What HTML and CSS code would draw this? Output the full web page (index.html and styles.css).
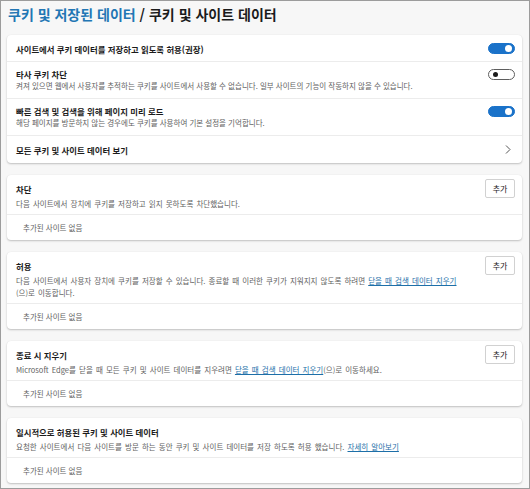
FILE: index.html
```html
<!DOCTYPE html>
<html lang="ko">
<head>
    <meta charset="UTF-8">
    <meta name="viewport" content="width=device-width, initial-scale=1.0">
    <title>쿠키 및 사이트 데이터</title>
    <link rel="stylesheet" href="styles.css">
</head>
<body>
    <div class="frame">
        <h1 class="page-title"><a class="crumb" href="#">쿠키 및 저장된 데이터</a> / 쿠키 및 사이트 데이터</h1>

        <div class="card">
            <div class="row">
                <div class="row-text">
                    <div class="row-title">사이트에서 쿠키 데이터를 저장하고 읽도록 허용(권장)</div>
                </div>
                <span class="toggle on"></span>
            </div>
            <div class="row">
                <div class="row-text">
                    <div class="row-title">타사 쿠키 차단</div>
                    <div class="row-desc">켜져 있으면 웹에서 사용자를 추적하는 쿠키를 사이트에서 사용할 수 없습니다. 일부 사이트의 기능이 작동하지 않을 수 있습니다.</div>
                </div>
                <span class="toggle"></span>
            </div>
            <div class="row">
                <div class="row-text">
                    <div class="row-title">빠른 검색 및 검색을 위해 페이지 미리 로드</div>
                    <div class="row-desc">해당 페이지를 방문하지 않는 경우에도 쿠키를 사용하여 기본 설정을 기억합니다.</div>
                </div>
                <span class="toggle on"></span>
            </div>
            <div class="row">
                <div class="row-text">
                    <div class="row-title">모든 쿠키 및 사이트 데이터 보기</div>
                </div>
                <svg class="chevron" width="6" height="9" viewBox="0 0 6 9"><path d="M1 0.5 L5 4.5 L1 8.5" fill="none" stroke="#555" stroke-width="1"/></svg>
            </div>
        </div>

        <div class="card">
            <div class="list-head">
                <div class="row-text">
                    <div class="list-title">차단</div>
                    <div class="row-desc">다음 사이트에서 장치에 쿠키를 저장하고 읽지 못하도록 차단했습니다.</div>
                </div>
                <button class="add-btn">추가</button>
            </div>
            <div class="empty">추가된 사이트 없음</div>
        </div>

        <div class="card">
            <div class="list-head">
                <div class="row-text">
                    <div class="list-title">허용</div>
                    <div class="row-desc">다음 사이트에서 사용자 장치에 쿠키를 저장할 수 있습니다. 종료할 때 이러한 쿠키가 지워지지 않도록 하려면 <a href="#">닫을 때 검색 데이터 지우기</a><br>(으)로 이동합니다.</div>
                </div>
                <button class="add-btn">추가</button>
            </div>
            <div class="empty">추가된 사이트 없음</div>
        </div>

        <div class="card">
            <div class="list-head">
                <div class="row-text">
                    <div class="list-title">종료 시 지우기</div>
                    <div class="row-desc">Microsoft Edge를 닫을 때 모든 쿠키 및 사이트 데이터를 지우려면 <a href="#">닫을 때 검색 데이터 지우기</a>(으)로 이동하세요.</div>
                </div>
                <button class="add-btn">추가</button>
            </div>
            <div class="empty">추가된 사이트 없음</div>
        </div>

        <div class="card">
            <div class="list-head">
                <div class="row-text">
                    <div class="list-title">일시적으로 허용된 쿠키 및 사이트 데이터</div>
                    <div class="row-desc">요청한 사이트에서 다음 사이트를 방문 하는 동안 쿠키 및 사이트 데이터를 저장 하도록 허용 했습니다. <a href="#">자세히 알아보기</a></div>
                </div>
            </div>
            <div class="empty">추가된 사이트 없음</div>
        </div>
    </div>
</body>
</html>
```

FILE: styles.css
```css
html, body {
    margin: 0;
    padding: 0;
}
body {
    font-family: "Noto Sans CJK KR", "Noto Sans", sans-serif;
    color: #1b1b1b;
    background: #fff;
}
.frame {
    box-sizing: border-box;
    width: 530px;
    height: 489px;
    border: 1px solid #9c9c9c;
    background-color: #f7f7f7;
    padding: 0 7px 0 6px;
    overflow: hidden;
}
.page-title {
    margin: 0;
    padding: 3px 0 0 1px;
    height: 34px;
    box-sizing: border-box;
    font-size: 14px;
    line-height: 20px;
    font-weight: 700;
    color: #1b1b1b;
}
.crumb {
    color: #2276b4;
    text-decoration: none;
}
.card {
    background: #fff;
    border-radius: 4px;
    box-shadow: 0 1px 2px rgba(0, 0, 0, 0.22), 0 0 1px rgba(0, 0, 0, 0.08);
    margin-bottom: 12px;
}
.row {
    display: flex;
    align-items: center;
    padding: 6px 7px 6px 9px;
    min-height: 13px;
    border-top: 1px solid #ececec;
}
.row:first-child {
    border-top: none;
    padding-top: 7px;
    padding-bottom: 6px;
}
.row:last-child {
    padding-top: 7px;
    padding-bottom: 7px;
}
.row-text {
    flex: 1;
    min-width: 0;
}
.row-title {
    font-size: 8.4px;
    line-height: 12px;
    font-weight: 700;
}
.row-desc {
    font-size: 7.5px;
    line-height: 12px;
    margin-top: 2px;
    color: #616161;
}
.row .row-desc {
    margin-top: 0;
}
.list-head .row-desc {
    word-spacing: 1px;
}
.row-desc a {
    color: #1d6fa8;
}
.toggle {
    flex: none;
    position: relative;
    box-sizing: border-box;
    width: 27px;
    height: 11px;
    border-radius: 6px;
    border: 1px solid #5e5e5e;
    background: #fff;
    align-self: flex-start;
    margin-top: 1px;
}
.toggle::after {
    content: "";
    position: absolute;
    left: 4px;
    top: 2px;
    width: 5px;
    height: 5px;
    border-radius: 50%;
    background: #1b1b1b;
}
.toggle.on {
    background: #1a72c9;
    border-color: #1a72c9;
}
.toggle.on::after {
    left: auto;
    right: 2px;
    top: 1px;
    width: 7px;
    height: 7px;
    background: #fff;
}
.chevron {
    margin-right: 4px;
}
.list-head {
    display: flex;
    padding: 7px 7px 4px 9px;
    border-bottom: 1px solid #ececec;
}
.list-title {
    font-size: 8.4px;
    line-height: 14px;
    font-weight: 700;
}
.add-btn {
    flex: none;
    align-self: flex-start;
    margin: -3px 0 0 6px;
    width: 30px;
    height: 19px;
    padding: 0;
    border: 1px solid #d1d1d1;
    border-radius: 2px;
    background: #fff;
    font-family: inherit;
    font-size: 8px;
    color: #1b1b1b;
}
.empty {
    padding: 6px 0 6px 16px;
    font-size: 7.5px;
    line-height: 13px;
    color: #616161;
}
```
